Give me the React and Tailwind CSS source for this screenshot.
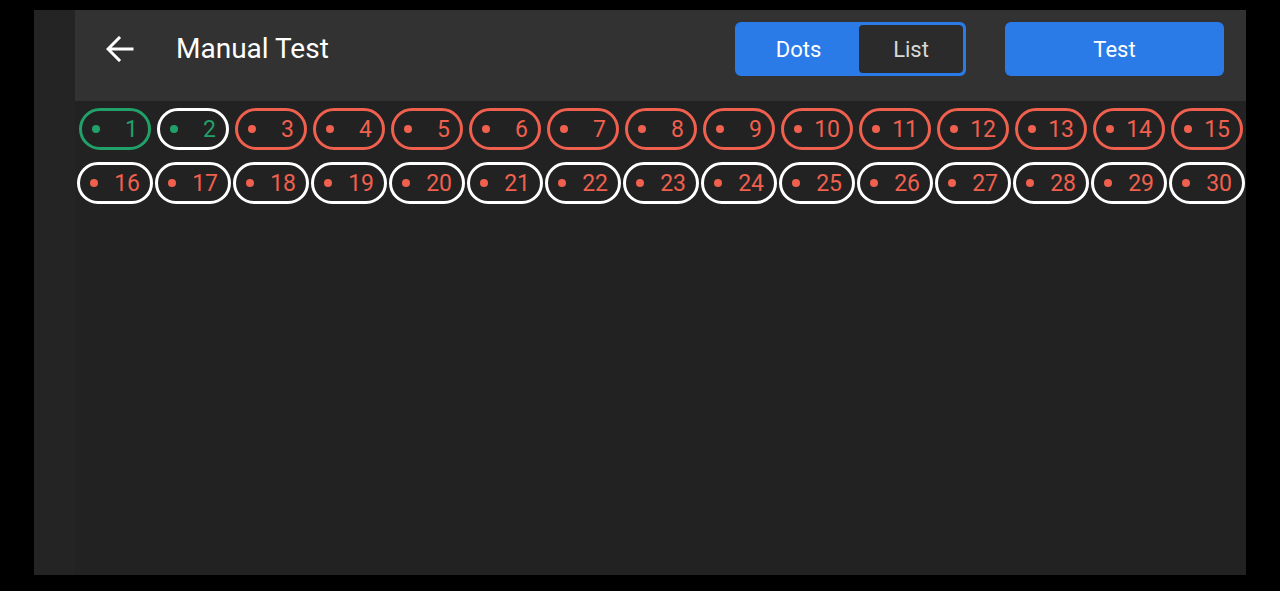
import React from "react";

function Pill({ n, row }) {
  const green = n <= 2;
  const border = n === 1 ? "border-[#21a06a]" : n === 2 || row === 2 ? "border-white" : "border-[#f0604e]";
  const text = green ? "text-[#21a06a]" : "text-[#f0604e]";
  const dot = green ? "bg-[#21a06a]" : "bg-[#f0604e]";
  const margin = row === 1 ? "mx-[3px]" : "mx-px";
  return (
    <div className="w-[78px] flex">
      <div
        className={`flex-1 ${margin} h-[42px] rounded-full border-[3px] ${border} flex items-center justify-between pl-[10px] pr-[10px]`}
      >
        <span className={`w-[8px] h-[8px] rounded-full ${dot}`} />
        <span className={`${text} text-[23px] leading-none`}>{n}</span>
      </div>
    </div>
  );
}

export default function App() {
  const row1 = Array.from({ length: 15 }, (_, i) => i + 1);
  const row2 = Array.from({ length: 15 }, (_, i) => i + 16);
  return (
    <div
      className="w-[1280px] h-[591px] bg-black pt-[10px] pl-[34px] overflow-hidden"
      style={{ fontFamily: "Roboto, 'Noto Sans', sans-serif" }}
    >
      <div className="w-[1212px] h-[565px] flex bg-[#222222]">
        <div className="w-[41px] h-full bg-[#242424]" />
        <div className="flex-1 flex flex-col overflow-hidden">
          <div className="h-[91px] bg-[#323232] flex items-start pt-[12px] pl-[31px] pr-[22px] shrink-0">
            <div className="h-[54px] flex items-center">
              <svg width="28" height="26" viewBox="0 0 28 26" fill="none" className="text-white">
                <path d="M26 13H3M13 2L2 13l11 11" stroke="currentColor" strokeWidth="3" strokeLinecap="square" />
              </svg>
            </div>
            <div className="ml-[42px] h-[54px] flex items-center text-white text-[28px] leading-none">Manual Test</div>
            <div className="ml-auto flex h-[54px] w-[231px] rounded-[6px] border-[3px] border-[#2a7be8] bg-[#2a7be8] overflow-hidden">
              <div className="w-[121px] flex items-center justify-center text-white text-[22px]">Dots</div>
              <div className="flex-1 bg-[#2b2b2b] rounded-[4px] flex items-center justify-center text-[#d8d8d8] text-[22px]">
                List
              </div>
            </div>
            <div className="ml-[39px] h-[54px] w-[219px] rounded-[6px] bg-[#2a7be8] flex items-center justify-center text-white text-[22px]">
              Test
            </div>
          </div>
          <div className="pt-[7px] pl-px flex flex-col gap-[12px]">
            <div className="flex">
              {row1.map((n) => (
                <Pill key={n} n={n} row={1} />
              ))}
            </div>
            <div className="flex">
              {row2.map((n) => (
                <Pill key={n} n={n} row={2} />
              ))}
            </div>
          </div>
        </div>
      </div>
    </div>
  );
}
